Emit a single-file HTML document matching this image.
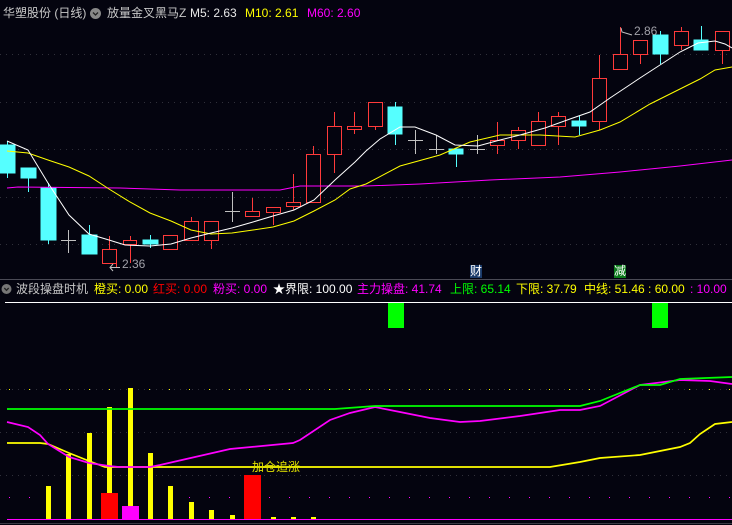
<!DOCTYPE html>
<html><head><meta charset="utf-8"><style>
html,body{margin:0;padding:0;background:#04040f;}
#w{position:relative;width:732px;height:525px;overflow:hidden;background:#04040f;font-family:"Liberation Sans","Noto Sans CJK SC",sans-serif;font-size:12px;}
.t{position:absolute;white-space:nowrap;line-height:14px;}
svg{position:absolute;left:0;top:0;}
</style></head><body><div id="w">
<svg width="732" height="525" viewBox="0 0 732 525" shape-rendering="crispEdges">
<g stroke="#30303a" stroke-dasharray="1 5" stroke-width="1">
<line x1="0" y1="54.5" x2="732" y2="54.5"/><line x1="0" y1="102.5" x2="732" y2="102.5"/><line x1="0" y1="149.5" x2="732" y2="149.5"/><line x1="0" y1="197.5" x2="732" y2="197.5"/><line x1="0" y1="244.5" x2="732" y2="244.5"/>
<line x1="0" y1="389.5" x2="732" y2="389.5"/><line x1="0" y1="432.5" x2="732" y2="432.5"/><line x1="0" y1="475.5" x2="732" y2="475.5"/>
</g>
<g stroke="#ff00ff" stroke-dasharray="1 19" stroke-width="1"><line x1="9" y1="497.5" x2="732" y2="497.5"/></g>
<g stroke="#ffff00" stroke-dasharray="1 19" stroke-width="1"><line x1="9" y1="389.5" x2="732" y2="389.5"/></g>
<g stroke-width="1">
<g fill="#55ffff" stroke="#55ffff">
<line x1="7.5" y1="141" x2="7.5" y2="178"/><rect x="0" y="145" width="15" height="28"/>
<line x1="28.5" y1="168" x2="28.5" y2="192"/><rect x="21" y="168" width="15" height="10"/>
<line x1="48.5" y1="183" x2="48.5" y2="244"/><rect x="41" y="188" width="15" height="52"/>
<line x1="89.5" y1="225" x2="89.5" y2="254"/><rect x="82" y="235" width="15" height="19"/>
<line x1="150.5" y1="235" x2="150.5" y2="248"/><rect x="143" y="240" width="15" height="4"/>
<line x1="395.5" y1="102" x2="395.5" y2="145"/><rect x="388" y="107" width="14" height="27"/>
<line x1="456.5" y1="149" x2="456.5" y2="167"/><rect x="449" y="149" width="14" height="5"/>
<line x1="579.5" y1="116" x2="579.5" y2="135"/><rect x="572" y="121" width="14" height="5"/>
<line x1="660.5" y1="31" x2="660.5" y2="64"/><rect x="653" y="35" width="15" height="19"/>
<line x1="701.5" y1="26" x2="701.5" y2="50"/><rect x="694" y="40" width="14" height="10"/>
</g>
<g fill="#04040f" stroke="#ff3a3a">
<line x1="109.5" y1="236" x2="109.5" y2="249"/><rect x="102.5" y="249.5" width="14" height="14"/>
<line x1="130.5" y1="236" x2="130.5" y2="263"/><rect x="123.5" y="240.5" width="13" height="4"/>
<rect x="163.5" y="235.5" width="14" height="14"/>
<line x1="191.5" y1="217" x2="191.5" y2="221"/><rect x="184.5" y="221.5" width="14" height="19"/>
<line x1="211.5" y1="240" x2="211.5" y2="249"/><rect x="204.5" y="221.5" width="14" height="19"/>
<line x1="252.5" y1="198" x2="252.5" y2="211"/><rect x="245.5" y="211.5" width="14" height="5"/>
<line x1="273.5" y1="212" x2="273.5" y2="225"/><rect x="266.5" y="207.5" width="14" height="5"/>
<line x1="293.5" y1="174" x2="293.5" y2="210"/><rect x="286.5" y="202.5" width="14" height="4"/>
<line x1="313.5" y1="146" x2="313.5" y2="154"/><rect x="306.5" y="154.5" width="14" height="48"/>
<line x1="334.5" y1="112" x2="334.5" y2="173"/><rect x="327.5" y="126.5" width="14" height="28"/>
<line x1="354.5" y1="112" x2="354.5" y2="134"/><rect x="347.5" y="126.5" width="14" height="3"/>
<line x1="375.5" y1="126" x2="375.5" y2="130"/><rect x="368.5" y="102.5" width="14" height="24"/>
<line x1="497.5" y1="122" x2="497.5" y2="154"/><rect x="490.5" y="140.5" width="14" height="5"/>
<line x1="518.5" y1="127" x2="518.5" y2="149"/><rect x="511.5" y="130.5" width="14" height="10"/>
<line x1="538.5" y1="112" x2="538.5" y2="121"/><rect x="531.5" y="121.5" width="14" height="24"/>
<line x1="558.5" y1="112" x2="558.5" y2="145"/><rect x="551.5" y="116.5" width="14" height="10"/>
<line x1="599.5" y1="55" x2="599.5" y2="130"/><rect x="592.5" y="78.5" width="14" height="43"/>
<line x1="620.5" y1="27" x2="620.5" y2="54"/><rect x="613.5" y="54.5" width="14" height="15"/>
<line x1="640.5" y1="54" x2="640.5" y2="64"/><rect x="633.5" y="40.5" width="14" height="14"/>
<line x1="681.5" y1="27" x2="681.5" y2="50"/><rect x="674.5" y="31.5" width="14" height="14"/>
<line x1="722.5" y1="50" x2="722.5" y2="64"/><rect x="715.5" y="31.5" width="14" height="19"/>
</g>
<g stroke="#c0c0c0">
<line x1="68.5" y1="230" x2="68.5" y2="253"/><line x1="61" y1="240.5" x2="76" y2="240.5"/>
<line x1="232.5" y1="192" x2="232.5" y2="222"/><line x1="225" y1="211.5" x2="240" y2="211.5"/>
<line x1="415.5" y1="130" x2="415.5" y2="154"/><line x1="408" y1="140.5" x2="423" y2="140.5"/>
<line x1="436.5" y1="135" x2="436.5" y2="154"/><line x1="429" y1="149.5" x2="444" y2="149.5"/>
<line x1="477.5" y1="135" x2="477.5" y2="154"/><line x1="470" y1="149.5" x2="485" y2="149.5"/>
</g>
</g>
<g fill="none" stroke-width="1" shape-rendering="auto">
<polyline stroke="#ff00ff" points="7,188 18,187 120,188 180,190 280,190 300,186 366,186 420,184 490,180 560,177 620,172 680,166 732,160"/>
<polyline stroke="#ffff00" points="7,151 28,153 48,160 69,167 89,176 109,189 130,202 150,213 171,221 191,230 211,234 232,233 253,230 273,227 294,221 314,211 335,200 350,189 366,184 400,166 440,155 470,142 500,135 540,135 575,137 600,130 620,122 650,104 680,89 700,79 715,70 732,67"/>
<polyline stroke="#ffffff" points="7,141 28,150 48,183 69,215 89,234 109,240 125,245 150,246 171,244 191,238 211,233 232,228 253,222 273,216 294,210 314,200 335,180 355,162 366,151 380,139 400,127 415,127 436,135 455,145 478,146 500,140 520,135 545,128 570,119 590,112 610,98 640,78 660,65 680,52 698,43 715,41 725,44 732,48"/>
</g>
<g stroke="#ff3a3a"><line x1="116.5" y1="263" x2="116.5" y2="268"/></g>
<polyline points="113,264 110,267.5 113,271" fill="none" stroke="#c0c0c0" shape-rendering="auto"/>
<line x1="110" y1="267.5" x2="120" y2="267.5" stroke="#c0c0c0"/>
<polyline points="621,28 622,32 632,35" fill="none" stroke="#c0c0c0" shape-rendering="auto"/>
<line x1="0" y1="279.5" x2="732" y2="279.5" stroke="#4a4a55"/>
<line x1="5" y1="302.5" x2="732" y2="302.5" stroke="#ffffff"/>
<rect x="470" y="265" width="12" height="13" fill="#1a3a6a"/>
<rect x="614" y="265" width="12" height="13" fill="#0a7a1a"/>
<rect x="388" y="303" width="16" height="25" fill="#00ff00"/>
<rect x="652" y="303" width="16" height="25" fill="#00ff00"/>
<g fill="#ffff00">
<rect x="46" y="486" width="5" height="33"/><rect x="66" y="454" width="5" height="65"/><rect x="87" y="433" width="5" height="86"/>
<rect x="107" y="407" width="5" height="112"/><rect x="128" y="388" width="5" height="131"/><rect x="148" y="453" width="5" height="66"/>
<rect x="168" y="486" width="5" height="33"/><rect x="189" y="502" width="5" height="17"/><rect x="209" y="510" width="5" height="9"/>
<rect x="230" y="515" width="5" height="4"/><rect x="271" y="517" width="5" height="2"/><rect x="291" y="517" width="5" height="2"/><rect x="311" y="517" width="5" height="2"/>
</g>
<rect x="101" y="493" width="17" height="26" fill="#ff0000"/>
<rect x="244" y="475" width="17" height="44" fill="#ff0000"/>
<rect x="122" y="506" width="17" height="14" fill="#ff00ff"/>
<line x1="7" y1="519.5" x2="732" y2="519.5" stroke="#ff00ff"/>
<line x1="0" y1="523.5" x2="732" y2="523.5" stroke="#3a3a44"/>
<g fill="none" stroke-width="1.7" shape-rendering="auto">
<polyline stroke="#ffff00" points="7,443 40,443 48,444 69,453 89,461 105,467 550,467 580,462 600,458 640,455 680,447 690,443 700,434 715,424 732,422"/>
<polyline stroke="#ff00ff" points="7,422 28,427 40,435 48,444 69,457 89,463 109,466 119,467 150,467 160,465 230,449 293,443 300,440 330,420 350,413 375,407 400,412 430,418 460,422 480,421 520,416 560,410 580,410 600,406 640,385 680,380 710,381 732,384"/>
<polyline stroke="#00ff00" points="7,409 335,409 375,406 580,406 600,401 640,385 660,385 680,379 732,377"/>
</g>
<g shape-rendering="auto">
<circle cx="95.5" cy="13.5" r="5.5" fill="#888"/>
<polyline points="93,12.5 95.5,15 98,12.5" fill="none" stroke="#222" stroke-width="1.3"/>
<circle cx="6.5" cy="289" r="5" fill="#777"/>
<polyline points="4.3,288 6.5,290.3 8.7,288" fill="none" stroke="#222" stroke-width="1.3"/>
</g>
</svg>
<div class="t" style="left:3px;top:6px;color:#c8c8c8;">华塑股份 (日线)</div>
<div class="t" style="left:107px;top:6px;color:#c8c8c8;">放量金叉黑马Z</div>
<div class="t" style="left:190px;top:6px;color:#e8e8e8;">M5: 2.63</div>
<div class="t" style="left:245px;top:6px;color:#ffff00;">M10: 2.61</div>
<div class="t" style="left:307px;top:6px;color:#ff00ff;">M60: 2.60</div>
<div class="t" style="left:122px;top:257px;color:#a0a0a8;font-size:12px;">2.36</div>
<div class="t" style="left:634px;top:24px;color:#a0a0a8;font-size:12px;">2.86</div>
<div class="t" style="left:470px;top:264px;color:#fff;font-size:12px;">财</div>
<div class="t" style="left:614px;top:264px;color:#fff;font-size:12px;">减</div>
<div class="t" style="left:16px;top:282px;color:#c8c8c8;">波段操盘时机</div>
<div class="t" style="left:94px;top:282px;color:#ffff00;">橙买: 0.00</div>
<div class="t" style="left:153px;top:282px;color:#ff0000;">红买: 0.00</div>
<div class="t" style="left:213px;top:282px;color:#ff00ff;">粉买: 0.00</div>
<div class="t" style="left:273px;top:282px;color:#ffffff;">★界限: 100.00</div>
<div class="t" style="left:357px;top:282px;color:#ff00ff;">主力操盘: 41.74</div>
<div class="t" style="left:450px;top:282px;color:#00ff00;">上限: 65.14</div>
<div class="t" style="left:516px;top:282px;color:#ffff00;">下限: 37.79</div>
<div class="t" style="left:584px;top:282px;color:#ffff00;">中线: 51.46 : 60.00</div>
<div class="t" style="left:690px;top:282px;color:#ff00ff;">: 10.00</div>
<div class="t" style="left:252px;top:460px;color:#e0e000;font-size:12px;">加仓追涨</div>
</div></body></html>
